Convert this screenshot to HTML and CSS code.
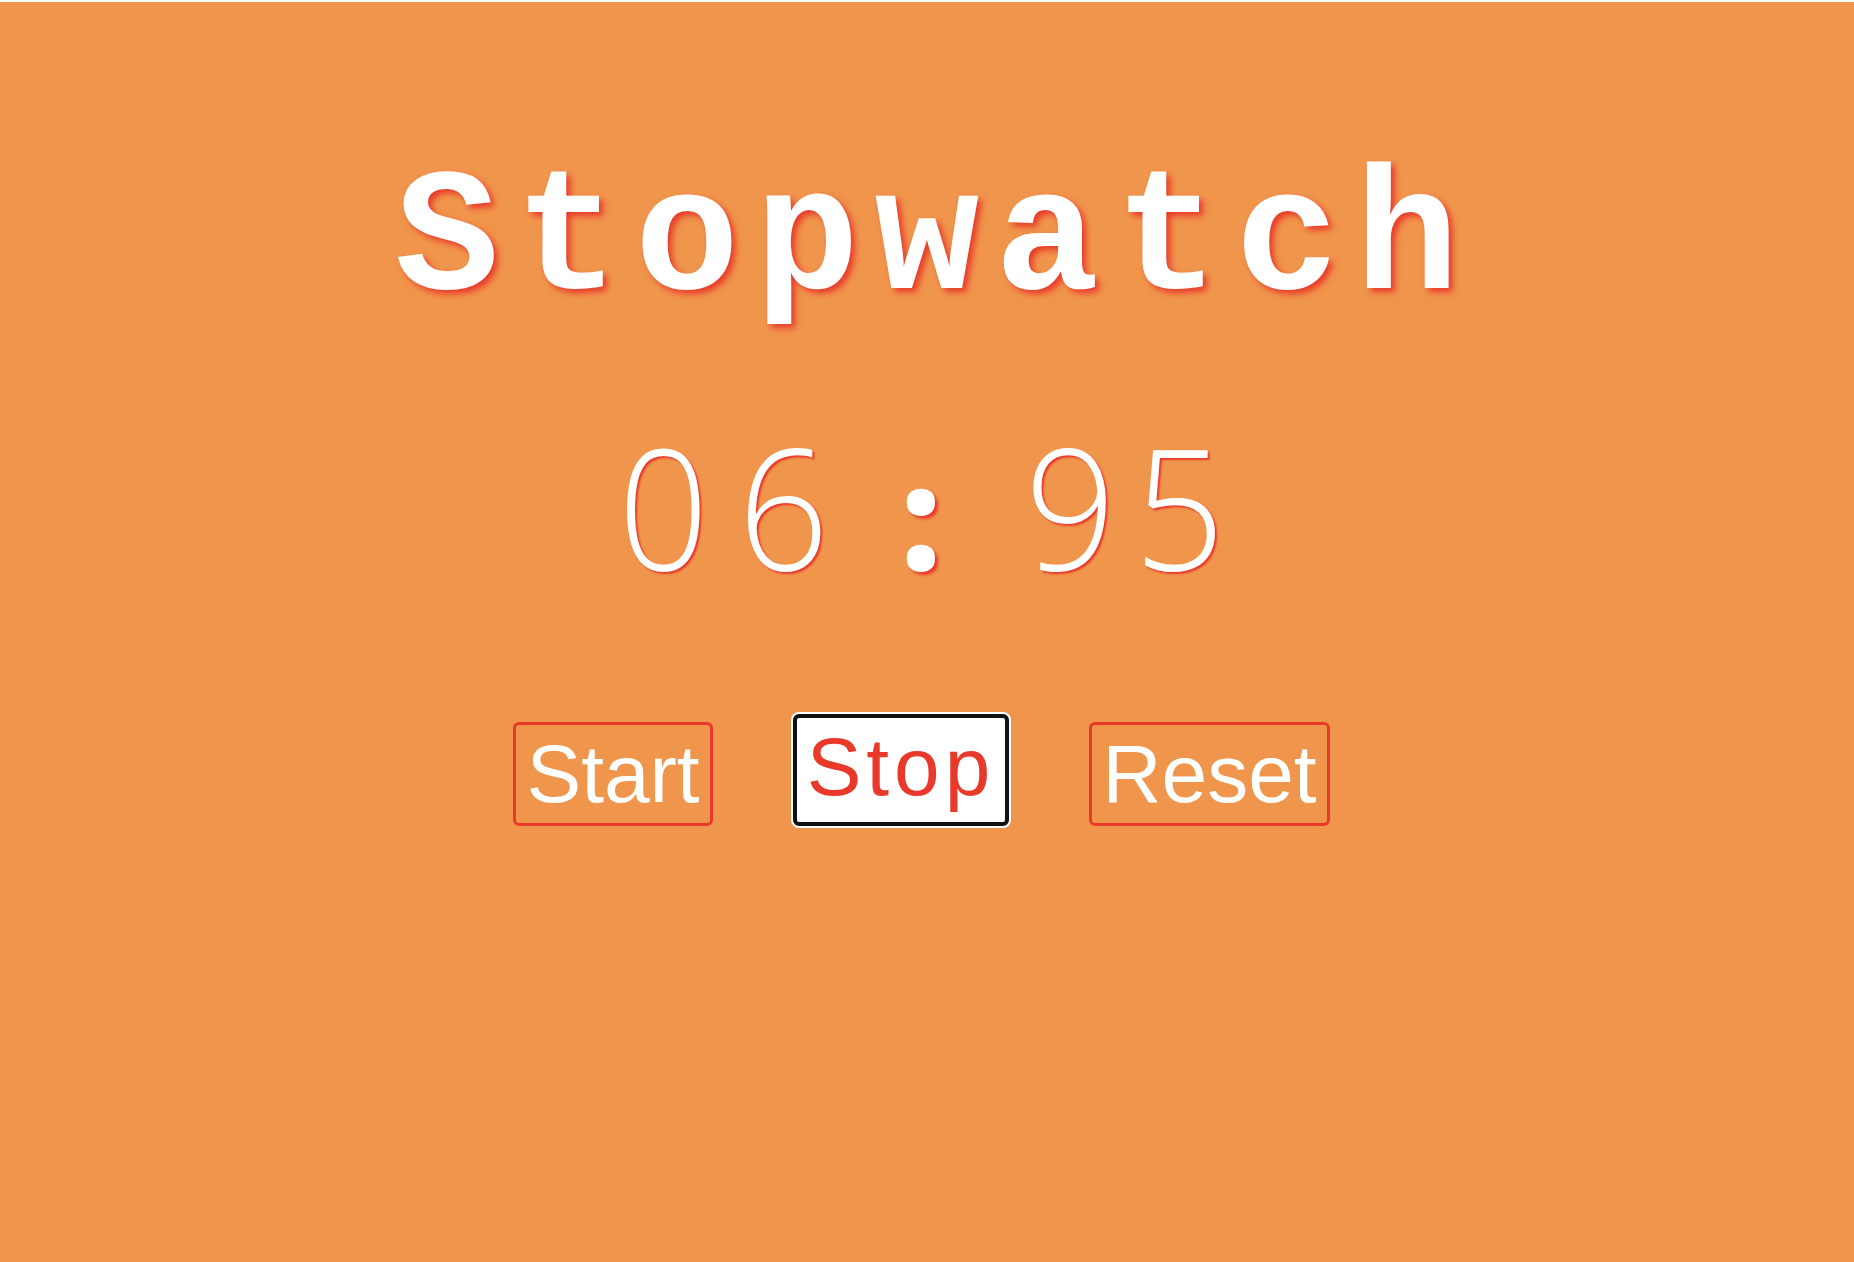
FILE: index.html
```html
<!DOCTYPE html>
<html lang="en">
<head>
<meta charset="utf-8">
<title>Stopwatch</title>
<link rel="stylesheet" href="styles.css">
</head>
<body>
<main class="page">
  <h1 class="title">Stopwatch</h1>
  <div class="timer">
    <span class="digit">0</span><span class="digit">6</span><span class="colon">:</span><span class="digit">9</span><span class="digit digit-last">5</span>
  </div>
  <div class="controls">
    <button class="btn">Start</button>
    <button class="btn btn-active">Stop</button>
    <button class="btn">Reset</button>
  </div>
</main>
</body>
</html>
```
FILE: styles.css
```css
html, body {
  margin: 0;
  padding: 0;
  background: #ffffff;
}
body {
  padding-top: 2px;
}
.page {
  background: #f0954c;
  min-height: 1260px;
  display: flex;
  flex-direction: column;
  align-items: center;
  padding-top: 120px;
  box-sizing: border-box;
}
.title {
  margin: 0;
  padding-left: 15.6px;
  font-family: "Liberation Mono", "Courier New", monospace;
  font-weight: bold;
  font-size: 174px;
  letter-spacing: 15.6px;
  line-height: 240px;
  color: #ffffff;
  text-shadow: 4px 4px 6px #e8392a;
}
.timer {
  margin-top: 63px;
  padding-right: 11px;
  display: flex;
  align-items: baseline;
  font-family: "Open Sans", "Lato", "Roboto", sans-serif;
  font-weight: 300;
  font-size: 159px;
  line-height: 160px;
  color: #ffffff;
  text-shadow: 2px 2px 2px #e8392a;
  transform: scaleY(1.06);
  transform-origin: 50% 50%;
}
.digit {
  width: 120px;
  text-align: center;
}
.digit-last {
  width: 109px;
  text-indent: -11px;
}
.colon {
  width: 167px;
  padding-right: 12px;
  box-sizing: border-box;
  text-align: center;
  font-size: 138px;
  line-height: 1;
  font-weight: 800;
  text-shadow: 3px 3px 3px #e8392a;
}
.controls {
  margin-top: 129px;
  padding-right: 11px;
  display: flex;
  align-items: flex-end;
  gap: 80px;
}
.btn {
  font-family: "Liberation Sans", Arial, sans-serif;
  font-size: 82px;
  line-height: normal;
  color: #ffffff;
  background: transparent;
  border: 3px solid #e8392a;
  border-radius: 6px;
  padding: 2px 10px;
  margin: 0;
}
.btn-active {
  background: #ffffff;
  color: #e8392a;
  letter-spacing: 5px;
  border: 4px solid #111111;
  padding: 2px 10px 8px;
  box-shadow: 0 0 0 2px #ffffff;
}
```
